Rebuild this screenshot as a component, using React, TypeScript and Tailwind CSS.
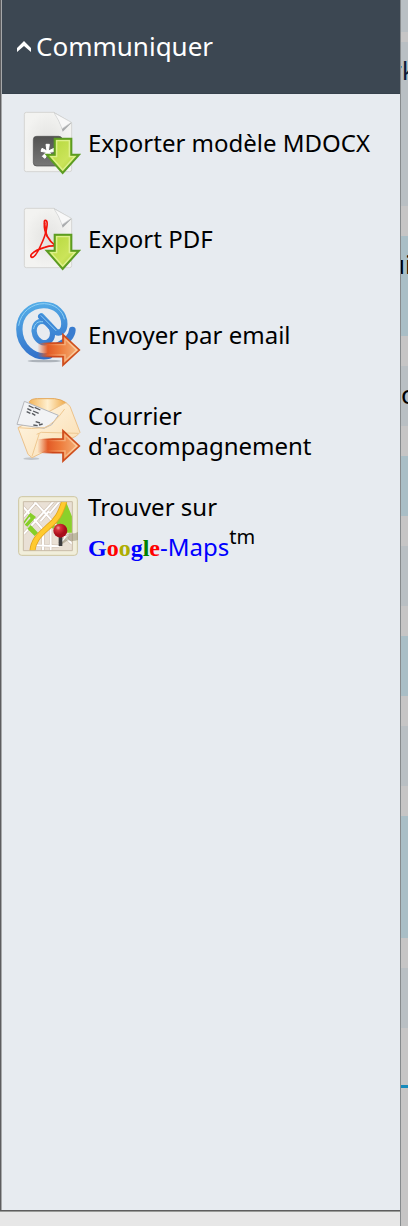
import type { ReactNode } from "react";

const Svg = ({ children }: { children: ReactNode }) => (
  <svg viewBox="12 24 216 216" className="size-[72px] shrink-0" aria-hidden="true">
    {children}
  </svg>
);

const Sheet = () => (
  <>
    <path d="M49 37H131L185 68V209Q185 215 179 215H49Q43 215 43 209V43Q43 37 49 37Z" fill="url(#sheet)" stroke="#d5d5d3" strokeWidth="3" />
    <path d="M131 37L185 68L158 95Q150 65 131 37Z" fill="#a9abad" />
    <path d="M132 38L184 67L156 86Q148 62 132 38Z" fill="#f8f8f8" stroke="#d3d4d5" strokeWidth="2" />
  </>
);

const DownArrow = () => (
  <>
    <path d="M134 116H184V164H207L158 219L110 164H134Z" fill="url(#green)" stroke="#5c9c22" strokeWidth="6" />
    <path d="M140 122H178V170H194L158 210L123 170H140Z" fill="none" stroke="#ddf08b" strokeWidth="4" />
  </>
);

const RightArrow = () => (
  <>
    <path d="M82 153H159V128L208 174L159 219V194H82Z" fill="url(#orange)" />
    <path d="M94 153H159V128L208 174L159 219V194H94" fill="none" stroke="url(#rim)" strokeWidth="5" />
    <path d="M106 158H165V141L200 174L165 206V189H106" fill="none" stroke="url(#glow)" strokeWidth="4" />
  </>
);

const Defs = () => (
  <svg className="absolute size-0" aria-hidden="true">
    <defs>
      <radialGradient id="sheet">
        <stop offset="0" stopColor="#e3e3e1" />
        <stop offset="1" stopColor="#f3f3f1" />
      </radialGradient>
      <linearGradient id="dark" x1="0" y1="0" x2="0" y2="1">
        <stop offset="0" stopColor="#525252" />
        <stop offset="1" stopColor="#777777" />
      </linearGradient>
      <linearGradient id="green" x1="0" y1="0" x2="1" y2="1">
        <stop offset="0" stopColor="#b2d638" />
        <stop offset=".6" stopColor="#cbe45a" />
        <stop offset="1" stopColor="#a0c92c" />
      </linearGradient>
      <linearGradient id="orange">
        <stop offset="0" stopColor="#e2602c" stopOpacity="0" />
        <stop offset=".25" stopColor="#e25a26" />
        <stop offset=".55" stopColor="#ee7c3c" />
        <stop offset="1" stopColor="#f5b47c" />
      </linearGradient>
      <linearGradient id="rim">
        <stop offset="0" stopColor="#cc4518" stopOpacity="0" />
        <stop offset=".3" stopColor="#cc4518" />
        <stop offset="1" stopColor="#cf521f" />
      </linearGradient>
      <linearGradient id="glow">
        <stop offset="0" stopColor="#f6ba8b" stopOpacity="0" />
        <stop offset="1" stopColor="#fbd0a4" />
      </linearGradient>
      <linearGradient id="blue" gradientUnits="userSpaceOnUse" x1="70" y1="30" x2="110" y2="205">
        <stop offset="0" stopColor="#55aee8" />
        <stop offset="1" stopColor="#2f6cc8" />
      </linearGradient>
      <linearGradient id="flap">
        <stop offset="0" stopColor="#f2b45a" />
        <stop offset=".5" stopColor="#fff0d0" />
        <stop offset="1" stopColor="#f0aa48" />
      </linearGradient>
      <linearGradient id="paper" x1="0" y1="0" x2="1" y2="1">
        <stop offset="0" stopColor="#fff8e8" />
        <stop offset="1" stopColor="#fadcae" />
      </linearGradient>
      <radialGradient id="pin" cx=".35" cy=".3">
        <stop offset="0" stopColor="#f4a0a0" />
        <stop offset=".35" stopColor="#d5323b" />
        <stop offset="1" stopColor="#a80d1b" />
      </radialGradient>
      <clipPath id="mapArea">
        <path d="M40 53H187V200H40Z" />
      </clipPath>
    </defs>
  </svg>
);

const DocxIcon = () => (
  <Svg>
    <Sheet />
    <rect x="70" y="109" width="86" height="89" rx="10" fill="url(#dark)" stroke="#4c4c4c" strokeWidth="2" />
    <path d="M111 153L108 133H118L115 153L132 145L135 154L118 157L130 169L122 175L113 160L105 175L97 169L109 157L93 154L96 145Z" fill="#fff" stroke="#fff" strokeWidth="3" />
    <DownArrow />
  </Svg>
);

const PdfIcon = () => (
  <Svg>
    <Sheet />
    <g fill="none" stroke="#f3150c" strokeLinecap="round">
      <path d="M104 82Q101 73 107 73Q113 74 111 90Q108 117 90 153Q76 184 66 184Q59 182 65 174Q76 162 104 154Q120 149 134 150" strokeWidth="5" />
      <path d="M103 82Q102 103 111 120Q121 138 136 149" strokeWidth="5" />
      <path d="M104 76Q106 100 112 122" strokeWidth="3" />
    </g>
    <DownArrow />
  </Svg>
);

const EmailIcon = () => (
  <Svg>
    <ellipse cx="103" cy="207" rx="50" ry="4" fill="#9aa0a8" opacity=".75" />
    <g fill="none" strokeLinecap="round" strokeLinejoin="round">
      <path d="M118 191C70 202 28 160 28 112C28 68 60 40 100 39C138 38 163 65 163 96C163 118 149 126 137 119L94 73" stroke="url(#blue)" strokeWidth="19" />
      <path d="M187 114C186 130 172 147 146 160" stroke="#397ccf" strokeWidth="20" />
      <ellipse cx="100" cy="120" rx="27" ry="33" transform="rotate(-22 100 120)" stroke="url(#blue)" strokeWidth="16" />
      <path d="M92 74L136 119" stroke="#3d87d6" strokeWidth="16" />
      <path d="M26 100C32 60 66 34 103 35C134 36 158 56 163 81M93 71L138 116M71 110C74 94 84 87 98 89" stroke="#8fd0f5" strokeWidth="3" />
    </g>
    <RightArrow />
  </Svg>
);

const LetterIcon = () => (
  <Svg>
    <ellipse cx="64" cy="212" rx="24" ry="4" fill="#a9abb0" opacity=".6" />
    <path d="M58 41Q64 32 82 32H134Q154 34 168 44L136 82L70 65Z" fill="url(#flap)" stroke="#e5a554" strokeWidth="3" />
    <path d="M24 119L168 44L180 55L210 133L199 144L66 209L54 199Z" fill="url(#paper)" stroke="#ecc28b" strokeWidth="3" />
    <path d="M43 40L145 82L125 110L102 121L21 109Z" fill="#f2f3f5" stroke="#b5b7bc" strokeWidth="3" />
    <path d="M24 119Q65 124 103 119Q132 108 164 63M88 136L66 205M80 139L94 133L204 136" fill="none" stroke="#efc891" strokeWidth="3" />
    <path d="M56 53L71 60M74 58L91 66M52 62L64 68M69 69L86 76M50 71L61 76M66 76L76 82M77 101L90 105M70 111L83 113M87 111L98 108" stroke="#55585d" strokeWidth="4" />
    <RightArrow />
  </Svg>
);

const MapIcon = () => (
  <Svg>
    <rect x="26" y="38" width="176" height="176" rx="9" fill="#f1eedb" stroke="#cec6a1" strokeWidth="3" />
    <path d="M40 53H187V200H40Z" fill="#e9e0d5" />
    <g clipPath="url(#mapArea)">
      <path d="M168 53L187 100V146H145L118 126Q150 92 168 53Z" fill="#8cd02b" />
      <g fill="none" stroke="#cbbcae" strokeWidth="9">
        <path d="M35 63L100 138M71 50L138 123M35 104L78 56M41 150L130 53M91 112L117 81M119 88L148 53" />
        <path d="M99 151V205M122 136V200M76 184L147 187M133 130L187 180M147 179L177 153" />
      </g>
      <g fill="none" stroke="#fff" strokeWidth="6">
        <path d="M35 63L100 138M71 50L138 123M35 104L78 56M41 150L130 53M91 112L117 81M119 88L148 53" />
        <path d="M99 151V205M122 136V200M76 184L147 187M133 130L187 180M147 179L177 153" />
      </g>
      <path d="M42 112L61 86L78 99L52 128L44 122L62 102L58 98L42 120ZM52 134L62 123L84 146L74 156Z" fill="#86cf28" />
      <path d="M67 204C69 167 91 151 113 130C140 109 151 91 164 48" fill="none" stroke="#e3a51d" strokeWidth="18" />
      <path d="M67 204C69 167 91 151 113 130C140 109 151 91 164 48" fill="none" stroke="#ffca2e" strokeWidth="13" />
    </g>
    <path d="M40 200V53H187V200Z" fill="none" stroke="#c9bca8" strokeWidth="3" />
    <path d="M154 176L178 148Q192 150 204 144V168Q187 174 174 169L154 182Z" fill="#8e866b" opacity=".5" />
    <rect x="146" y="158" width="11" height="28" fill="#3c3c3e" />
    <circle cx="151" cy="140" r="21" fill="url(#pin)" />
  </Svg>
);

const actions: { icon: ReactNode; label: ReactNode }[] = [
  { icon: <DocxIcon />, label: "Exporter modèle MDOCX" },
  { icon: <PdfIcon />, label: "Export PDF" },
  { icon: <EmailIcon />, label: "Envoyer par email" },
  { icon: <LetterIcon />, label: "Courrier d'accompagnement" },
  {
    icon: <MapIcon />,
    label: (
      <>
        <span className="block">Trouver sur</span>
        <span className="block pt-2.5 text-[#0000ff]">
          <b className="font-['Liberation_Serif',serif]">
            G<span className="text-[#ff0000]">o</span>
            <span className="text-[#adad00]">o</span>g
            <span className="text-[#008000]">l</span>
            <span className="text-[#ff0000]">e</span>
          </b>
          -Maps<sup className="-top-3 text-xl leading-none text-black">tm</sup>
        </span>
      </>
    ),
  },
];

const bands = [
  { style: "h-8 bg-[#b9bfc3]" },
  { style: "mt-[10px] h-[164px] bg-[#b9bfc3] pt-3", text: "rk", shift: "-ml-[10px] text-[#0c1c38]" },
  { style: "mt-[30px] h-[100px] bg-[#a9bec6] pt-3", text: "ui", shift: "-ml-3" },
  { style: "mt-[30px] h-[60px] bg-[#b9bfc3] pt-3", text: "c", shift: "" },
  { style: "mt-[30px] h-[60px] bg-[#a9bec6]" },
  { style: "mt-[30px] h-[60px] bg-[#b9bfc3]" },
  { style: "mt-[30px] h-[60px] bg-[#a9bec6]" },
  { style: "mt-[30px] h-[60px] bg-[#b9bfc3]" },
  { style: "mt-[30px] h-[122px] bg-[#a9bec6]" },
  { style: "mt-[30px] h-[60px] bg-[#b9bfc3]" },
  { style: "mt-[57px] h-[3px] bg-[#168abb]" },
];

export default function App() {
  return (
    <div className="flex min-h-screen bg-[#c6c5c5] font-['Noto_Sans',sans-serif] text-2xl text-black">
      <Defs />
      <div className="flex min-w-0 flex-1 flex-col">
        <aside className="flex flex-1 flex-col border-l border-[#5d5d5f]">
          <div className="flex flex-1 flex-col border-l border-[#a6a8aa] bg-[#e7ebf0]">
            <h2>
              <button type="button" aria-expanded="true" className="flex h-[94px] w-full items-center gap-1 border-b border-[#36414c] bg-[#3c4752] pl-[14px] text-left text-[26px] text-white">
                <svg viewBox="0 0 16 12" className="h-3 w-4" aria-hidden="true">
                  <path d="M8 0L15 7V11L8 5L1 11V7Z" fill="currentColor" />
                </svg>
                Communiquer
              </button>
            </h2>
            <ul className="pt-0.5">
              {actions.map((action, i) => (
                <li key={i}>
                  <button type="button" className="flex h-24 w-full items-center gap-0.5 pl-3 text-left leading-[30px]">
                    {action.icon}
                    <span className="pb-0.5">{action.label}</span>
                  </button>
                </li>
              ))}
            </ul>
          </div>
        </aside>
        <footer className="h-4 border-t border-[#5d5d5d] bg-[#e7e7e7]">
          <div className="border-t border-[#999b98]" />
        </footer>
      </div>
      <div className="w-2 overflow-hidden border-l border-[#878b8d]">
        {bands.map((band, i) => (
          <div key={i} className={band.style}>
            {band.text && <span className={`block w-8 text-[26px] leading-8 ${band.shift}`}>{band.text}</span>}
          </div>
        ))}
      </div>
    </div>
  );
}
